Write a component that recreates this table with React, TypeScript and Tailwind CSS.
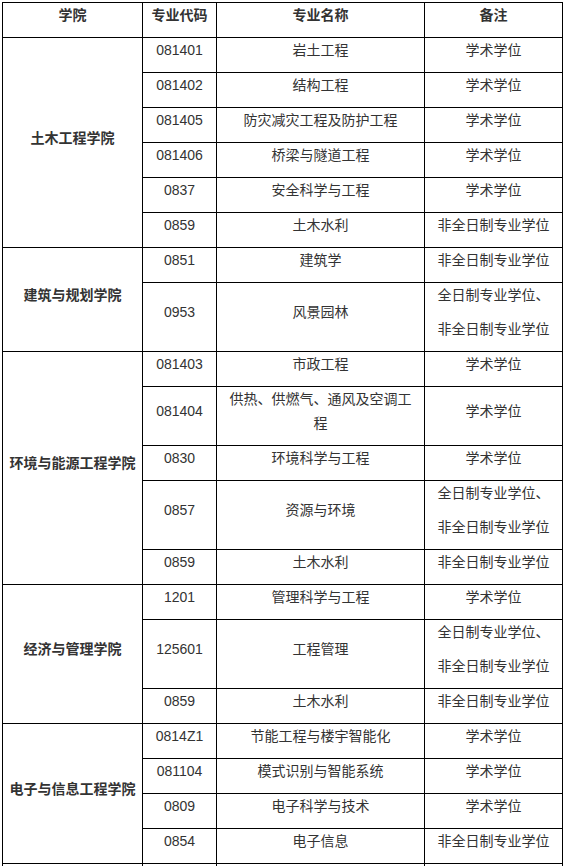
type Major = {
  code: string;
  name: string;
  note: string[];
};

type College = {
  name: string;
  majors: Major[];
};

const ACADEMIC = ["学术学位"];
const PART_TIME = ["非全日制专业学位"];
const BOTH = ["全日制专业学位、", "非全日制专业学位"];

const colleges: College[] = [
  {
    name: "土木工程学院",
    majors: [
      { code: "081401", name: "岩土工程", note: ACADEMIC },
      { code: "081402", name: "结构工程", note: ACADEMIC },
      { code: "081405", name: "防灾减灾工程及防护工程", note: ACADEMIC },
      { code: "081406", name: "桥梁与隧道工程", note: ACADEMIC },
      { code: "0837", name: "安全科学与工程", note: ACADEMIC },
      { code: "0859", name: "土木水利", note: PART_TIME },
    ],
  },
  {
    name: "建筑与规划学院",
    majors: [
      { code: "0851", name: "建筑学", note: PART_TIME },
      { code: "0953", name: "风景园林", note: BOTH },
    ],
  },
  {
    name: "环境与能源工程学院",
    majors: [
      { code: "081403", name: "市政工程", note: ACADEMIC },
      { code: "081404", name: "供热、供燃气、通风及空调工程", note: ACADEMIC },
      { code: "0830", name: "环境科学与工程", note: ACADEMIC },
      { code: "0857", name: "资源与环境", note: BOTH },
      { code: "0859", name: "土木水利", note: PART_TIME },
    ],
  },
  {
    name: "经济与管理学院",
    majors: [
      { code: "1201", name: "管理科学与工程", note: ACADEMIC },
      { code: "125601", name: "工程管理", note: BOTH },
      { code: "0859", name: "土木水利", note: PART_TIME },
    ],
  },
  {
    name: "电子与信息工程学院",
    majors: [
      { code: "0814Z1", name: "节能工程与楼宇智能化", note: ACADEMIC },
      { code: "081104", name: "模式识别与智能系统", note: ACADEMIC },
      { code: "0809", name: "电子科学与技术", note: ACADEMIC },
      { code: "0854", name: "电子信息", note: PART_TIME },
    ],
  },
  {
    name: "计算机科学与技术学院",
    majors: [
      { code: "0812", name: "计算机科学与技术", note: ACADEMIC },
      { code: "0854", name: "电子信息", note: PART_TIME },
    ],
  },
];

const cell = "border border-black py-0 text-center align-middle";
const tight = cell + " px-0 whitespace-nowrap";
const line = "leading-6 mb-[10px]";

export default function App() {
  return (
    <div
      className="bg-white pl-[2px] pt-[2px] text-[14px] text-[#333]"
      style={{ fontFamily: '"Liberation Sans", "Noto Sans CJK SC", sans-serif' }}
    >
      <table className="w-[560px] table-fixed border-collapse">
        <colgroup>
          <col className="w-[140px]" />
          <col className="w-[74px]" />
          <col className="w-[208px]" />
          <col className="w-[138px]" />
        </colgroup>
        <thead>
          <tr className="font-bold">
            <th className={tight}>
              <p className={line}>学院</p>
            </th>
            <th className={tight}>
              <p className={line}>专业代码</p>
            </th>
            <th className={tight}>
              <p className={line}>专业名称</p>
            </th>
            <th className={tight}>
              <p className={line}>备注</p>
            </th>
          </tr>
        </thead>
        <tbody>
          {colleges.map((college) =>
            college.majors.map((m, i) => (
              <tr key={college.name + m.code + i}>
                {i === 0 && (
                  <td rowSpan={college.majors.length} className={tight + " font-bold"}>
                    <p className={line}>{college.name}</p>
                  </td>
                )}
                <td className={tight}>
                  <p className={line}>{m.code}</p>
                </td>
                <td className={cell + " px-[10px]"}>
                  <p className={line}>{m.name}</p>
                </td>
                <td className={tight}>
                  {m.note.map((n) => (
                    <p key={n} className={line}>
                      {n}
                    </p>
                  ))}
                </td>
              </tr>
            ))
          )}
        </tbody>
      </table>
    </div>
  );
}
